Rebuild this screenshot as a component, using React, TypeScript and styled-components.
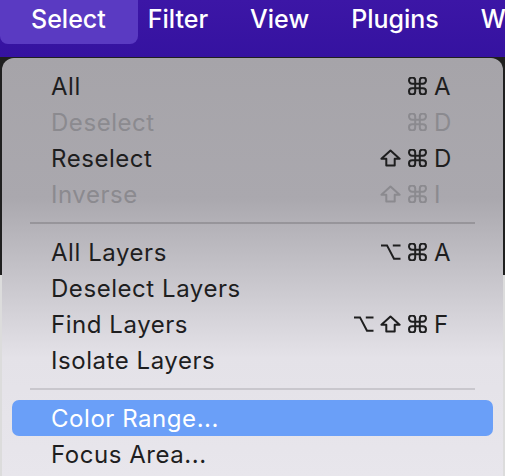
import React from 'react'
import styled, { createGlobalStyle, css } from 'styled-components'

const GlobalStyle = createGlobalStyle`
  html, body {
    margin: 0;
    padding: 0;
    background: #1f1f1f;
    overflow: hidden;
  }
  body {
    font-family: Inter, 'Noto Sans', 'Liberation Sans', sans-serif;
  }
`

const Screen = styled.div`
  width: 505px;
  height: 476px;
  display: flex;
  flex-direction: column;
  overflow: hidden;
  background: linear-gradient(180deg, #1f1f1f 0, #1f1f1f 275px, #dcdcdc 275px);
`

const MenuBar = styled.div`
  height: 57px;
  flex: none;
  display: flex;
  align-items: flex-start;
  padding-left: 10px;
  background: linear-gradient(180deg, #3c16a6 0%, #3512a0 100%);
  overflow: hidden;
`

const BarTitle = styled.div<{ $active?: boolean }>`
  position: relative;
  padding: 0 21px 6px;
  line-height: 38px;
  font-size: 25px;
  font-weight: 500;
  color: #fff;
  white-space: nowrap;
  z-index: 0;

  ${(p) =>
    p.$active &&
    css`
      &::before {
        content: '';
        position: absolute;
        top: -6px;
        bottom: 0;
        left: -10px;
        right: -11px;
        background: #5a3ac2;
        border-radius: 0 0 8px 8px;
        z-index: -1;
      }
    `}
`

const Panel = styled.div`
  flex: 1;
  margin: 1px 2px 0;
  padding: 10px 10px 0;
  border-radius: 12px 12px 0 0;
  background: linear-gradient(
    180deg,
    #a6a4a9 0px,
    #aaa8ae 140px,
    #e4e2e8 300px,
    #e8e6ec 420px
  );
`

const Item = styled.div<{ $disabled?: boolean; $selected?: boolean }>`
  height: 36px;
  display: flex;
  align-items: center;
  padding: 0 39px;
  border-radius: 7px;
  font-size: 24px;
  letter-spacing: 0.55px;
  color: ${(p) => (p.$disabled ? '#8b8a8f' : '#1e1e1f')};
  background: ${(p) => (p.$selected ? '#6a9ff8' : 'transparent')};
  ${(p) =>
    p.$selected &&
    css`
      color: #fff;
    `}
`

const Label = styled.span`
  flex: 1;
  white-space: nowrap;
`

const Keys = styled.span`
  display: flex;
  align-items: center;
  gap: 6px;
`

const KeyLetter = styled.span`
  width: 20px;
  text-align: left;
  letter-spacing: 0;
`

const Separator = styled.div<{ $tone?: string }>`
  height: 22px;
  display: flex;
  align-items: center;
  padding: 0 18px;

  &::after {
    content: '';
    flex: 1;
    height: 2px;
    background: ${(p) => p.$tone || 'rgba(120,118,124,0.45)'};
  }
`

const Glyph = styled.svg`
  width: 21px;
  height: 18px;
  flex: none;
  fill: none;
  stroke: currentColor;
  stroke-width: 2;
`

const Cmd = () => (
  <Glyph viewBox="0 0 21 18">
    <path d="M12.8 3.6V14.4A3.1 3.1 0 1 0 15.9 11.3H5.1A3.1 3.1 0 1 0 8.2 14.4V3.6A3.1 3.1 0 1 0 5.1 6.7H15.9A3.1 3.1 0 1 0 12.8 3.6" />
  </Glyph>
)

const Shift = () => (
  <Glyph viewBox="0 0 21 18" strokeLinejoin="round">
    <path d="M10.5 1.6 19.6 9.8h-4.9v6.6H6.3V9.8H1.4Z" />
  </Glyph>
)

const Opt = () => (
  <Glyph viewBox="0 0 21 18">
    <path d="M1 2.4h6l7 13.4h6.5M12.8 2.4h7.7" />
  </Glyph>
)

type Mod = 'opt' | 'shift' | 'cmd'

const modIcon = { opt: Opt, shift: Shift, cmd: Cmd }

type Entry =
  | { sep: true; tone?: string }
  | { label: string; mods?: Mod[]; key?: string; disabled?: boolean; selected?: boolean }

const entries: Entry[] = [
  { label: 'All', mods: ['cmd'], key: 'A' },
  { label: 'Deselect', mods: ['cmd'], key: 'D', disabled: true },
  { label: 'Reselect', mods: ['shift', 'cmd'], key: 'D' },
  { label: 'Inverse', mods: ['shift', 'cmd'], key: 'I', disabled: true },
  { sep: true, tone: 'rgba(128,126,132,0.55)' },
  { label: 'All Layers', mods: ['opt', 'cmd'], key: 'A' },
  { label: 'Deselect Layers' },
  { label: 'Find Layers', mods: ['opt', 'shift', 'cmd'], key: 'F' },
  { label: 'Isolate Layers' },
  { sep: true, tone: '#c9c7cd' },
  { label: 'Color Range...', selected: true },
  { label: 'Focus Area...' },
]

const titles = ['Select', 'Filter', 'View', 'Plugins', 'Window']

export default function App() {
  return (
    <>
      <GlobalStyle />
      <Screen>
        <MenuBar>
          {titles.map((t, i) => (
            <BarTitle key={t} $active={i === 0}>
              {t}
            </BarTitle>
          ))}
        </MenuBar>
        <Panel>
          {entries.map((e, i) => {
            if ('sep' in e) return <Separator key={i} $tone={e.tone} />
            return (
              <Item key={i} $disabled={e.disabled} $selected={e.selected}>
                <Label>{e.label}</Label>
                {e.key && (
                  <Keys>
                    {e.mods?.map((m) => {
                      const Icon = modIcon[m]
                      return <Icon key={m} />
                    })}
                    <KeyLetter>{e.key}</KeyLetter>
                  </Keys>
                )}
              </Item>
            )
          })}
        </Panel>
      </Screen>
    </>
  )
}
